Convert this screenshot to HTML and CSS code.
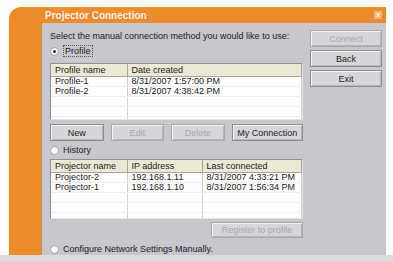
FILE: index.html
```html
<!DOCTYPE html>
<html lang="en">
<head>
    <meta charset="UTF-8">
    <meta name="viewport" content="width=device-width, initial-scale=1.0">
    <title>Projector Connection</title>
    <link rel="stylesheet" href="styles.css">
</head>
<body>
    <div class="window">
        <div class="titlebar">
            <span class="title">Projector Connection</span>
            <span class="close">x</span>
        </div>
        <div class="frame">
            <div class="gutter"></div>
            <div class="content">
                <div class="main">
                    <p class="prompt">Select the manual connection method you would like to use:</p>

                    <label class="option">
                        <span class="radio checked"></span>
                        <span class="focus">Profile</span>
                    </label>

                    <div class="list profile-list">
                        <table>
                            <tr class="head"><th class="c1">Profile name</th><th>Date created</th></tr>
                            <tr><td>Profile-1</td><td>8/31/2007 1:57:00 PM</td></tr>
                            <tr><td>Profile-2</td><td>8/31/2007 4:38:42 PM</td></tr>
                            <tr><td></td><td></td></tr>
                            <tr><td></td><td></td></tr>
                            <tr><td></td><td></td></tr>
                        </table>
                    </div>

                    <div class="list-buttons">
                        <button class="btn">New</button>
                        <button class="btn" disabled>Edit</button>
                        <button class="btn" disabled>Delete</button>
                        <button class="btn wide">My Connection</button>
                    </div>

                    <label class="option">
                        <span class="radio"></span>
                        <span>History</span>
                    </label>

                    <div class="list history-list">
                        <table>
                            <tr class="head"><th class="c1">Projector name</th><th class="c2">IP address</th><th>Last connected</th></tr>
                            <tr><td>Projector-2</td><td>192.168.1.11</td><td>8/31/2007 4:33:21 PM</td></tr>
                            <tr><td>Projector-1</td><td>192.168.1.10</td><td>8/31/2007 1:56:34 PM</td></tr>
                            <tr><td></td><td></td><td></td></tr>
                            <tr><td></td><td></td><td></td></tr>
                            <tr><td></td><td></td><td></td></tr>
                        </table>
                    </div>

                    <div class="register-row">
                        <button class="btn register" disabled>Register to profile</button>
                    </div>

                    <label class="option manual">
                        <span class="radio"></span>
                        <span>Configure Network Settings Manually.</span>
                    </label>
                </div>

                <div class="side">
                    <button class="btn side-btn" disabled>Connect</button>
                    <button class="btn side-btn">Back</button>
                    <button class="btn side-btn">Exit</button>
                </div>
            </div>
        </div>
    </div>
    <div class="floor"></div>
</body>
</html>
```

FILE: styles.css
```css
* {
    margin: 0;
    padding: 0;
    box-sizing: border-box;
}

body {
    font-family: "Liberation Sans", Arial, sans-serif;
    font-size: 9px;
    color: #1a1a1a;
    background: #ffffff;
    width: 393px;
    height: 262px;
    overflow: hidden;
}

.window {
    margin: 7px 0 0 9px;
    width: 377px;
    background: #ef8a2a;
    border-top-left-radius: 12px;
}

.titlebar {
    height: 16px;
    display: flex;
    align-items: center;
    justify-content: space-between;
    padding: 0 4px 0 36px;
}

.title {
    color: #fff4e6;
    font-weight: bold;
    font-size: 10px;
}

.close {
    width: 8px;
    height: 8px;
    line-height: 7px;
    text-align: center;
    font-size: 8px;
    font-weight: bold;
    color: #fff;
    background: #f4b277;
}

.frame {
    display: flex;
    height: 232px;
}

.gutter {
    width: 32px;
}

.content {
    flex: 1;
    display: flex;
    gap: 7px;
    padding: 7px 4px 0 8px;
    background: #c7c7cd;
    border-left: 1px solid #b9915f;
}

.main {
    width: 253px;
    display: flex;
    flex-direction: column;
}

.prompt {
    line-height: 12px;
    height: 12px;
}

.option {
    display: flex;
    align-items: center;
    gap: 4px;
    height: 12px;
    margin-top: 3px;
}

.option.manual {
    margin-top: 5px;
}

.radio {
    width: 9px;
    height: 9px;
    border-radius: 50%;
    background: #fff;
    border: 1px solid #9a9aa2;
    display: flex;
    align-items: center;
    justify-content: center;
}

.radio.checked::after {
    content: "";
    width: 3px;
    height: 3px;
    border-radius: 50%;
    background: #222;
}

.focus {
    border: 1px dotted #55555a;
    padding: 0 1px;
    line-height: 10px;
}

.list {
    background: #fff;
    border: 1px solid #8e8e96;
    border-right-color: #e4e4e8;
    border-bottom-color: #e4e4e8;
    overflow: hidden;
}

.profile-list {
    height: 57px;
    margin-top: 6px;
}

.history-list {
    height: 60px;
    margin-top: 3px;
}

table {
    width: 100%;
    border-collapse: collapse;
    table-layout: fixed;
}

th {
    height: 12px;
    text-align: left;
    font-weight: normal;
    padding: 0 4px;
    background: #ebe8d6;
    border-right: 1px solid #a8a596;
    border-bottom: 1px solid #a8a596;
    white-space: nowrap;
}

td {
    height: 10px;
    line-height: 9px;
    padding: 0 4px;
    border-right: 1px solid #cfcfd2;
    border-bottom: 1px solid #efefef;
    white-space: nowrap;
}

.c1 {
    width: 76px;
}

.c2 {
    width: 75px;
}

.btn {
    font-family: inherit;
    font-size: 9px;
    color: #1a1a1a;
    background: #d6d6da;
    border: 1px solid #8c8c94;
    box-shadow: inset 1px 1px 0 #f2f2f4, inset -1px -1px 0 #b4b4ba;
    height: 17px;
}

.btn:disabled {
    color: #a6a6ac;
    border-color: #a8a8ae;
}

.list-buttons {
    display: flex;
    gap: 7px;
    margin-top: 4px;
}

.list-buttons .btn {
    width: 54px;
}

.list-buttons .btn.wide {
    width: 72px;
}

.register-row {
    display: flex;
    justify-content: flex-end;
    margin-top: 3px;
}

.register {
    width: 92px;
    height: 16px;
}

.side {
    width: 72px;
    display: flex;
    flex-direction: column;
    gap: 3px;
}

.side-btn {
    height: 17px;
}

.floor {
    height: 8px;
    background: #dcdce0;
}
```
